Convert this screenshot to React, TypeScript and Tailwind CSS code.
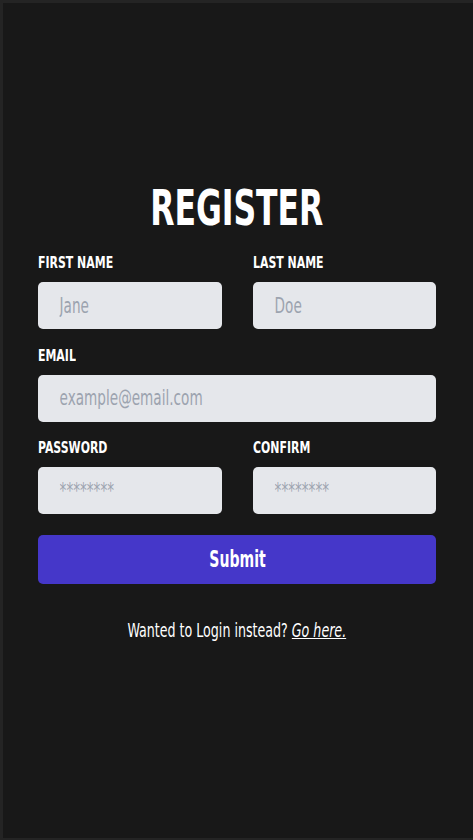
const font = { fontFamily: '"DejaVu Sans Condensed", "Liberation Sans", sans-serif' };

function Field({ label, placeholder, type = "text" }: { label: string; placeholder: string; type?: string }) {
  return (
    <div className="flex flex-col">
      <label className="inline-block origin-left scale-x-[0.76] whitespace-nowrap text-[16px] font-bold uppercase leading-[20px] text-white">
        {label}
      </label>
      <div className="mt-[9px] h-[47px] w-full overflow-hidden rounded-[5px] bg-[#e5e7eb]">
        <input
          type={type}
          placeholder={placeholder}
          className="h-full w-[139%] origin-left scale-x-[0.72] bg-transparent pl-[30px] text-[21px] text-gray-800 placeholder:text-[#9ca3af] outline-none"
          style={font}
        />
      </div>
    </div>
  );
}

export default function App() {
  return (
    <div
      className="flex h-[840px] w-full flex-col border-l-[3px] border-t-[3px] border-b-[2px] border-[#242424] bg-[#181818] pl-[35px] pr-[37px] pt-[173px]"
      style={font}
    >
      <h1 className="text-center text-[50px] font-bold leading-[64px] text-white">
        <span className="inline-block scale-x-[0.7]">REGISTER</span>
      </h1>

      <div className="mt-[13px] flex flex-col gap-[16.5px]">
        <div className="grid grid-cols-2 gap-[31px]">
          <Field label="First Name" placeholder="Jane" />
          <Field label="Last Name" placeholder="Doe" />
        </div>
        <Field label="Email" placeholder="example@email.com" type="email" />
        <div className="grid grid-cols-2 gap-[31px]">
          <Field label="Password" placeholder="********" type="password" />
          <Field label="Confirm" placeholder="********" type="password" />
        </div>
      </div>

      <button className="mt-[21px] h-[49px] w-full rounded-[5px] bg-[#4537c9] text-[23px] font-bold text-white">
        <span className="inline-block scale-x-[0.68]">Submit</span>
      </button>

      <p className="mt-[32px] text-center text-[19px] text-white">
        <span className="inline-block scale-x-[0.74] whitespace-nowrap">
          Wanted to Login instead?{" "}
          <a href="#" className="italic underline">
            Go here.
          </a>
        </span>
      </p>
    </div>
  );
}
